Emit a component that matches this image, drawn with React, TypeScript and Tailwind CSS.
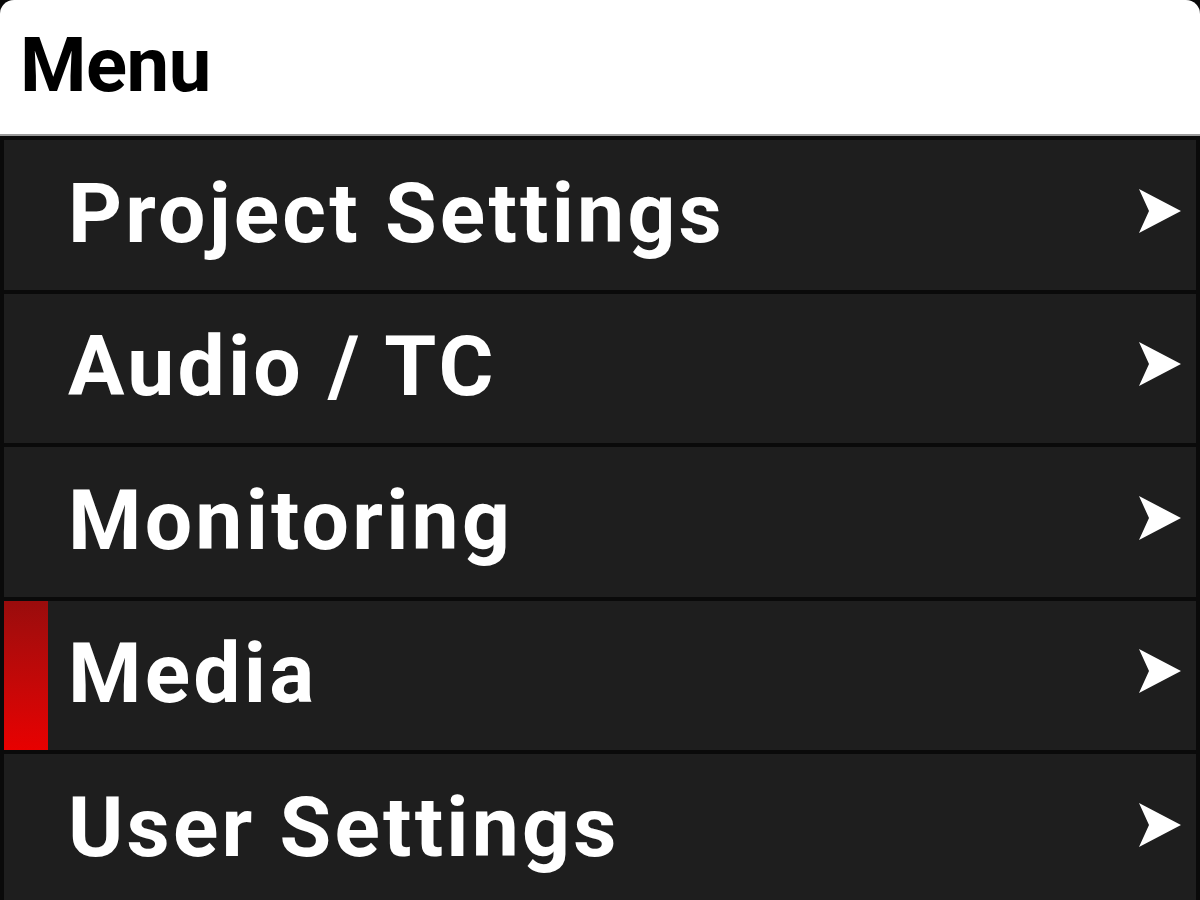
const items = ['Project Settings', 'Audio / TC', 'Monitoring', 'Media', 'User Settings'];

export default function App() {
  return (
    <div className="w-[1200px] h-[900px] overflow-hidden bg-[#0a0a0a] flex flex-col font-['Roboto',sans-serif]">
      <header className="h-[136px] shrink-0 bg-white rounded-t-[14px] border-b-2 border-[#9a9a9a] flex items-start px-[20px] pt-[27px]">
        <span className="text-[76px] leading-[1] font-bold text-black tracking-[-0.5px]">Menu</span>
      </header>
      <div className="flex-1 min-h-0 flex flex-col gap-[4px] pt-[4px] px-[4px]">
        {items.map((label) => (
          <MenuRow key={label} label={label} active={label === 'Media'} />
        ))}
      </div>
    </div>
  );
}

function MenuRow({ label, active }: { label: string; active: boolean }) {
  return (
    <div className="h-[149.5px] shrink-0 bg-[#1e1e1e] flex items-stretch">
      <div className="w-[44px] shrink-0">
        {active && <div className="h-full w-full bg-gradient-to-b from-[#9a0c0c] to-[#e80000]" />}
      </div>
      <div className="flex-1 flex items-center pl-[20px] pr-[14px]">
        <span className="flex-1 text-white font-bold text-[84px] leading-[1] tracking-[3.2px] pb-[2px]">{label}</span>
        <svg width="44" height="44" viewBox="0 0 44 44" className="shrink-0 -mt-[8px]">
          <path d="M1 0 L43 22 L1 44 L11 22 Z" fill="#ffffff" />
        </svg>
      </div>
    </div>
  );
}
